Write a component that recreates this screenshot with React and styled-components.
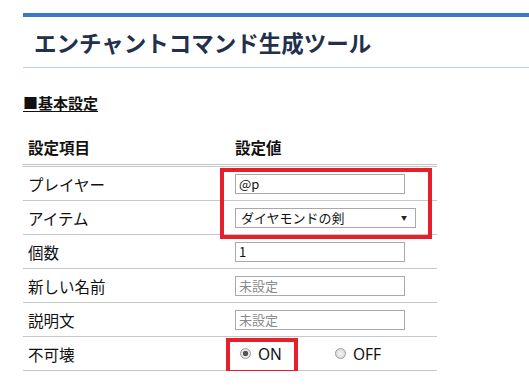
import React from 'react'
import styled, { createGlobalStyle } from 'styled-components'

const GlobalStyle = createGlobalStyle`
  body {
    margin: 0;
    background: #fff;
    font-family: "Noto Sans CJK JP", "Noto Sans", sans-serif;
    color: #111;
  }
`

const Page = styled.div`
  padding: 13px 0 0 23px;
`

const TopBar = styled.div`
  height: 4px;
  background: #3a78c8;
`

const TitleBlock = styled.header`
  height: 50px;
  display: flex;
  align-items: center;
  padding-left: 11px;
  border-bottom: 1px solid #bcd1e7;
`

const Title = styled.h1`
  margin: 0;
  font-size: 22.5px;
  line-height: 1;
  font-weight: 700;
  color: #22304d;
`

const SectionHeading = styled.h2`
  margin: 25px 0 0;
  font-size: 15px;
  line-height: 20px;
  font-weight: 700;
  text-decoration: underline;
  text-underline-offset: 2px;
  display: inline-block;
`

const Table = styled.div`
  position: relative;
  width: 414px;
  margin-top: 19px;
`

const Row = styled.div`
  display: grid;
  grid-template-columns: 207px 207px;
  align-items: center;
  height: ${p => (p.$head ? 31 : 33)}px;
  border-bottom: ${p => (p.$head ? '3px double #c4c4c4' : '1px solid #c8c8c8')};
`

const Cell = styled.div`
  padding-left: 5px;
  font-size: 15.5px;
  font-weight: ${p => (p.$head ? 700 : 400)};
  display: flex;
  align-items: center;
  margin-top: ${p => (p.$head ? -3 : 0)}px;
`

const TextInput = styled.input`
  box-sizing: border-box;
  width: 170px;
  height: 20px;
  border: 1px solid #a9a9a9;
  padding: 0 3px;
  font-family: "Noto Sans CJK JP", "Noto Sans", sans-serif;
  font-size: 13px;
  color: #111;
  outline: none;
  &::placeholder {
    color: #8a8a8a;
  }
`

const SelectBox = styled.div`
  box-sizing: border-box;
  width: 181px;
  height: 20px;
  border: 1px solid #a9a9a9;
  padding: 0 8px 0 5px;
  display: flex;
  align-items: center;
  justify-content: space-between;
  font-size: 13px;
`

const Arrow = styled.span`
  font-size: 6px;
  color: #222;
`

const RadioGroup = styled.div`
  display: flex;
  align-items: center;
`

const RadioLabel = styled.label`
  display: flex;
  align-items: center;
  gap: 7px;
  font-family: "Noto Sans", sans-serif;
  font-size: 15.5px;
  margin-left: ${p => p.$offset}px;
`

const RadioDot = styled.span`
  box-sizing: border-box;
  width: 11px;
  height: 11px;
  border-radius: 50%;
  border: 1px solid #9a9a9a;
  background: radial-gradient(circle, ${p => (p.$checked ? '#555 0 2.5px, #e6e6e6 3px' : '#f2f2f2 0, #d6d6d6 100%')});
`

const Highlight = styled.div`
  position: absolute;
  box-sizing: border-box;
  border: 4px solid #e3202b;
  pointer-events: none;
`

const rows = [
  { label: 'プレイヤー', kind: 'input', value: '@p' },
  { label: 'アイテム', kind: 'select', value: 'ダイヤモンドの剣' },
  { label: '個数', kind: 'input', value: '1' },
  { label: '新しい名前', kind: 'input', placeholder: '未設定' },
  { label: '説明文', kind: 'input', placeholder: '未設定' },
  { label: '不可壊', kind: 'radio' }
]

function renderValue (row) {
  if (row.kind === 'select') {
    return (
      <SelectBox>
        <span>{row.value}</span>
        <Arrow>▼</Arrow>
      </SelectBox>
    )
  }
  if (row.kind === 'radio') {
    return (
      <RadioGroup>
        <RadioLabel $offset={5}>
          <RadioDot $checked />
          ON
        </RadioLabel>
        <RadioLabel $offset={53}>
          <RadioDot />
          OFF
        </RadioLabel>
      </RadioGroup>
    )
  }
  return <TextInput readOnly value={row.value || ''} placeholder={row.placeholder} />
}

export default function App () {
  return (
    <Page>
      <GlobalStyle />
      <TopBar />
      <TitleBlock>
        <Title>エンチャントコマンド生成ツール</Title>
      </TitleBlock>
      <SectionHeading>■基本設定</SectionHeading>
      <Table>
        <Row $head>
          <Cell $head>設定項目</Cell>
          <Cell $head>設定値</Cell>
        </Row>
        {rows.map(row => (
          <Row key={row.label}>
            <Cell>{row.label}</Cell>
            <Cell>{renderValue(row)}</Cell>
          </Row>
        ))}
        <Highlight style={{ left: 197, top: 35, width: 212, height: 71 }} />
        <Highlight style={{ left: 203, top: 205, width: 72, height: 36 }} />
      </Table>
    </Page>
  )
}
